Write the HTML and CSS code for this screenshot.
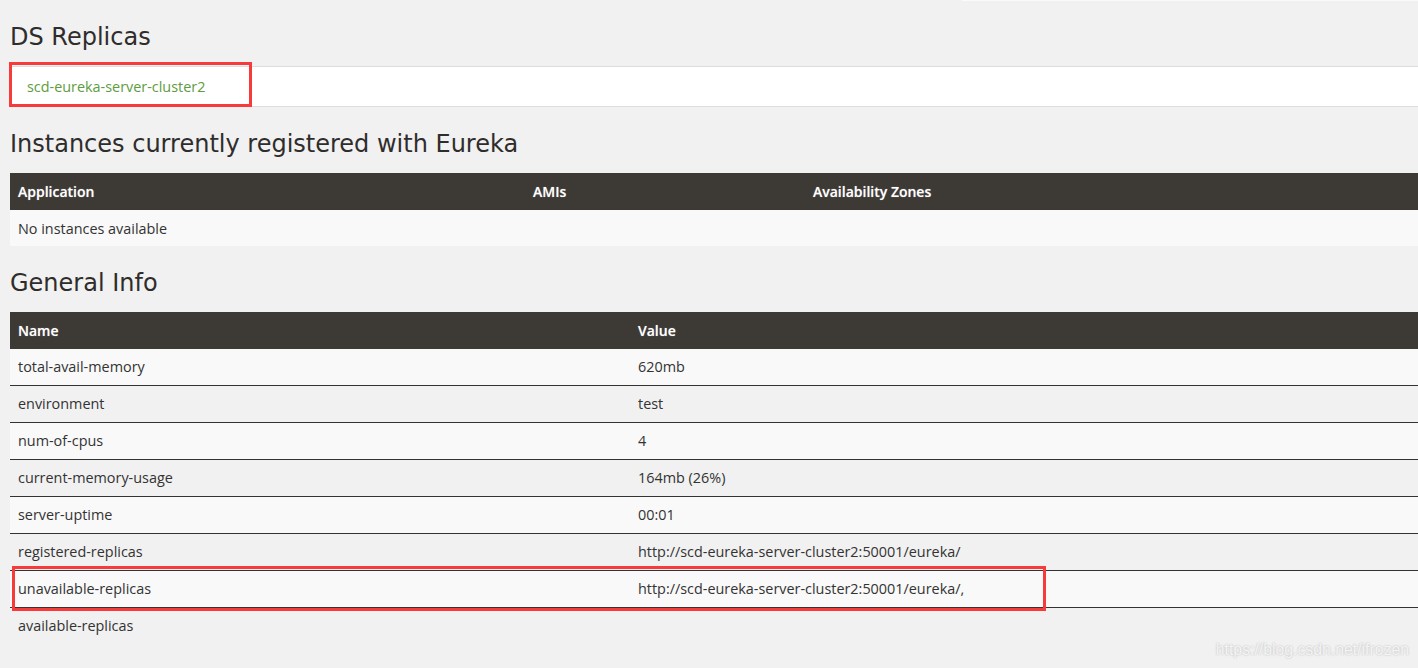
FILE: index.html
```html
<!DOCTYPE html>
<html lang="en">
<head>
  <meta charset="UTF-8" />
  <title>Eureka</title>
  <link rel="stylesheet" href="styles.css">
</head>
<body>
  <div class="top-strip"></div>
  <div class="container">
    <h1>DS Replicas</h1>
    <ul class="replicas">
      <li><a href="#">scd-eureka-server-cluster2</a></li>
    </ul>

    <h1>Instances currently registered with Eureka</h1>
    <table class="info instances">
      <thead>
        <tr>
          <th class="col-app">Application</th>
          <th class="col-ami">AMIs</th>
          <th>Availability Zones</th>
        </tr>
      </thead>
      <tbody>
        <tr><td colspan="3">No instances available</td></tr>
      </tbody>
    </table>

    <h1>General Info</h1>
    <table class="info general">
      <thead>
        <tr>
          <th class="col-name">Name</th>
          <th>Value</th>
        </tr>
      </thead>
      <tbody>
        <tr><td>total-avail-memory</td><td>620mb</td></tr>
        <tr><td>environment</td><td>test</td></tr>
        <tr><td>num-of-cpus</td><td>4</td></tr>
        <tr><td>current-memory-usage</td><td>164mb (26%)</td></tr>
        <tr><td>server-uptime</td><td>00:01</td></tr>
        <tr><td>registered-replicas</td><td>http://scd-eureka-server-cluster2:50001/eureka/</td></tr>
        <tr><td>unavailable-replicas</td><td>http://scd-eureka-server-cluster2:50001/eureka/,</td></tr>
        <tr><td>available-replicas</td><td></td></tr>
      </tbody>
    </table>
  </div>

  <!-- annotations -->
  <div class="mark mark-replica"></div>
  <div class="mark mark-unavailable"></div>
  <div class="watermark">https://blog.csdn.net/ifrozen</div>
</body>
</html>
```

FILE: styles.css
```css
html, body {
  margin: 0;
  padding: 0;
}

body {
  background: #f1f1f1;
  color: #333;
  font-family: "Open Sans", Arial, sans-serif;
  font-size: 14.4px;
  position: relative;
  height: 668px;
  overflow: hidden;
}

.top-strip {
  height: 1px;
  margin-left: 962px;
  background: #fafafa;
}

.container {
  padding-left: 10px;
}

h1 {
  font-family: "DejaVu Sans", sans-serif;
  font-size: 24px;
  font-weight: normal;
  color: #2f2d2b;
  line-height: 30px;
  margin: 22px 0 14px;
}

.container > h1:first-child {
  margin-top: 21px;
}

.replicas {
  list-style: none;
  margin: 0;
  padding: 0 17px;
  background: #fff;
  border-top: 1px solid #ddd;
  border-bottom: 1px solid #ddd;
}

.replicas li {
  line-height: 39px;
}

.replicas a {
  color: #5e9c3f;
  text-decoration: none;
}

/* Tables */
.info {
  width: 100%;
  border-collapse: collapse;
}

.info th {
  background: #3d3a35;
  color: #fff;
  font-size: 14px;
  font-weight: 600;
  text-align: left;
  height: 37px;
  padding: 0 8px;
  box-sizing: border-box;
  text-shadow: 0 0 1px rgba(255, 255, 255, 0.5);
}

.info td {
  height: 37px;
  padding: 0 8px;
  box-sizing: border-box;
  border-top: 1px solid #333;
}

.info tbody tr:first-child td {
  border-top: none;
  height: 36px;
}

.info tbody tr:nth-child(odd) td {
  background: #f9f9f9;
}

.instances tbody tr td {
  background: #f4f4f4;
}

.col-app {
  width: 515px;
}

.col-ami {
  width: 280px;
}

.col-name {
  width: 620px;
}

/* Annotation boxes */
.mark {
  position: absolute;
  border: 3px solid #f73a3a;
  box-sizing: border-box;
}

.mark-replica {
  left: 9px;
  top: 62px;
  width: 243px;
  height: 45px;
}

.mark-unavailable {
  left: 12px;
  top: 566px;
  width: 1034px;
  height: 45px;
}

.watermark {
  position: absolute;
  right: 9px;
  bottom: 9px;
  font-family: "Liberation Sans", Arial, sans-serif;
  font-size: 15.8px;
  color: #f4f4f4;
  text-shadow: 0 0 2px rgba(0, 0, 0, 0.25);
}
```
